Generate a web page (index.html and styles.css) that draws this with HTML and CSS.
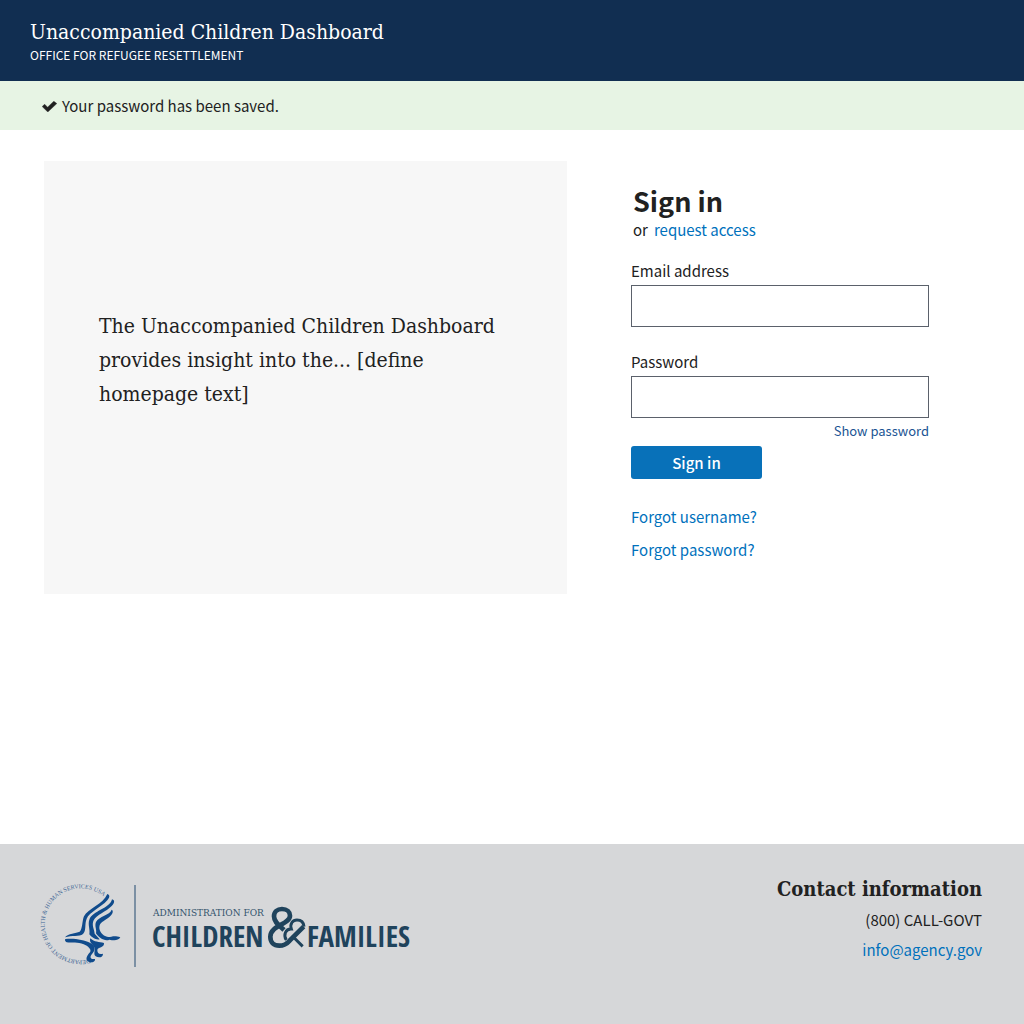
FILE: index.html
```html
<!DOCTYPE html>
<html lang="en">
<head>
<meta charset="utf-8">
<title>Unaccompanied Children Dashboard</title>
<meta name="viewport" content="width=device-width, initial-scale=1">
<link rel="stylesheet" href="styles.css">
</head>
<body>
<header class="site-header">
  <p class="site-title">Unaccompanied Children Dashboard</p>
  <p class="site-office">OFFICE FOR REFUGEE RESETTLEMENT</p>
</header>
<div class="alert" role="status">
  <svg class="alert-icon" viewBox="0 0 15 11" aria-hidden="true"><path d="M0.200 5.600 2.600 3.200 5.600 6.200 11.800 0.200 14.800 2.600 5.800 11Z" fill="#212121" stroke="#212121" stroke-width=".4" stroke-linejoin="round"/></svg>
  <span>Your password has been saved.</span>
</div>
<main class="content">
  <section class="intro">
    <p class="intro-text">The Unaccompanied Children Dashboard provides insight into the... [define homepage text]</p>
  </section>
  <section class="signin">
    <div class="signin-head">
      <h1 class="signin-title">Sign in</h1>
      <p class="signin-alt"><span>or</span> <a href="#request">request access</a></p>
    </div>
    <form class="form">
      <div class="field">
        <label class="label" for="email">Email address</label>
        <input class="input" id="email" type="email">
      </div>
      <div class="field">
        <label class="label" for="password">Password</label>
        <input class="input" id="password" type="password">
        <button class="show-password" type="button">Show password</button>
      </div>
      <button class="submit" type="submit">Sign in</button>
    </form>
    <ul class="help">
      <li><a href="#username">Forgot username?</a></li>
      <li><a href="#forgot">Forgot password?</a></li>
    </ul>
  </section>
</main>
<footer class="site-footer">
  <svg class="logo" viewBox="40 880 372 88" role="img" aria-label="Administration for Children and Families">
    <path id="ring" d="M90 959A36 36 0 1 1 109 902" fill="none"/>
    <text class="logo-ring"><textPath href="#ring">DEPARTMENT OF HEALTH &amp; HUMAN SERVICES USA</textPath></text>
    <g class="logo-eagle" transform="translate(60 890) scale(.3333)">
      <path d="M142 12C151 15 149 23 142 31C122 53 88 67 80 86C73 103 80 121 69 132C58 141 35 135 15 142C25 130 47 130 59 125C68 118 66 92 72 79C84 56 130 42 142 12Z"/>
      <path d="M156 28C166 31 163 40 155 48C138 66 110 73 101 91C94 106 103 118 104 131L119 148C108 151 95 142 88 133C91 118 83 104 88 89C97 62 150 56 156 28Z"/>
      <path d="M155 59C162 63 157 73 148 81C135 92 123 95 119 106C115 119 123 133 137 139C150 145 159 133 181 142C174 154 159 151 148 149C134 155 116 143 108 130C111 119 103 108 108 96C117 78 149 76 155 59Z"/>
      <path d="M16 147C42 144 72 149 91 159C109 167 105 184 96 192C88 201 91 209 105 207C107 216 91 221 83 214C75 207 82 195 90 187C96 179 84 168 71 163C54 156 35 160 20 157C15 154 14 150 16 147Z"/>
      <path d="M91 145C103 157 117 155 132 159C134 173 113 171 112 180C112 189 117 194 129 191C130 202 116 205 107 199C98 192 109 178 101 169C96 162 87 157 91 145Z"/>
    </g>
    <path d="M135 885V967" stroke="#7c90a4" stroke-width="2"/>
    <text class="logo-small" x="153" y="916">ADMINISTRATION FOR</text>
    <text class="logo-large" x="152" y="947">CHILDREN</text>
    <g class="logo-amp" transform="translate(264 902) scale(.3333)">
      <path d="M60 84C45 70 30 60 30 43C30 29 40 21 54 21C69 21 78 30 78 41C78 67 19 70 19 104C19 121 29 131 46 131C61 131 70 124 77 116L119 74"/>
      <path class="logo-amp-leaf" d="M67 114C57 99 65 80 82 81C77 65 86 54 99 54C112 54 119 62 120 74M91 108L116 133"/>
    </g>
    <text class="logo-large" x="307" y="947">FAMILIES</text>
  </svg>
  <address class="contact">
    <h2 class="contact-title">Contact information</h2>
    <p>(800) CALL-GOVT</p>
    <p><a href="mailto:info@agency.gov">info@agency.gov</a></p>
  </address>
</footer>
</body>
</html>
```
FILE: styles.css
```css
* { box-sizing: border-box; }
body {
  margin: 0;
  min-height: 100vh;
  display: flex;
  flex-direction: column;
  background: #fff;
  color: #212121;
  font: 15px/30px "Noto Sans CJK SC", "Open Sans", sans-serif;
}
p, h1, h2, ul { margin: 0; padding: 0; }
ul { list-style: none; }
a { color: #0071bc; text-decoration: none; }
.site-header { padding: 19px 30px 16px; background: #112e51; color: #fff; }
.site-title { font: 21px/26px "DejaVu Serif Condensed", "DejaVu Serif", serif; }
.site-office { font-size: 12px; line-height: 20px; }
.alert { display: flex; align-items: center; gap: 5px; padding: 10px 42px 9px; background: #e7f4e4; }
.alert-icon { width: 15px; height: 11px; }
.content { display: grid; grid-template-columns: 523fr 298fr; gap: 64px; padding: 31px 95px 48px 44px; align-items: start; }
.intro { min-height: 433px; padding: 148px 55px; background: #f7f7f7; }
.intro-text { font: 21px/34px "DejaVu Serif Condensed", "DejaVu Serif", serif; }
.signin { padding-top: 24px; }
.signin-head { padding-left: 2px; }
.signin-title { font-size: 27px; line-height: 32px; }
.signin-alt { display: flex; gap: 6px; line-height: 26px; }
.form { display: flex; flex-direction: column; gap: 3px; margin-top: 14px; }
.field { display: flex; flex-direction: column; }
.field + .field { margin-top: 18px; }
.label { line-height: 28px; }
.input { width: 100%; height: 42px; border: 1px solid #5b616b; background: #fff; font: inherit; }
.show-password { align-self: flex-end; padding: 0; border: 0; background: none; color: #205493; font: inherit; font-size: 13px; line-height: 25px; }
.submit { width: 131px; height: 33px; padding: 0; border: 0; border-radius: 3px; background: #0871b9; color: #fff; font: inherit; font-weight: 500; line-height: 32px; }
.help { margin-top: 21px; line-height: 33px; }
.site-footer { display: flex; justify-content: space-between; align-items: flex-start; margin-top: auto; min-height: 180px; padding: 30px 42px 30px 40px; background: #d6d7d9; }
.logo { width: 372px; height: 88px; margin-top: 6px; }
.logo-ring { font: 6px "Liberation Serif", serif; fill: #3d6594; }
.logo-eagle { fill: #104b8c; }
.logo-small { font: 10px "DejaVu Serif Condensed", serif; fill: #33536d; }
.logo-large { font: bold 29px "Open Sans Condensed", "Roboto Condensed", sans-serif; fill: #1f435c; }
.logo-amp { fill: none; stroke: #1f435c; stroke-width: 14; }
.logo-amp-leaf { stroke-width: 9; }
.contact { font-style: normal; text-align: right; }
.contact-title { margin-bottom: 1px; font: bold 20px/30px "DejaVu Serif Condensed", serif; }
```
